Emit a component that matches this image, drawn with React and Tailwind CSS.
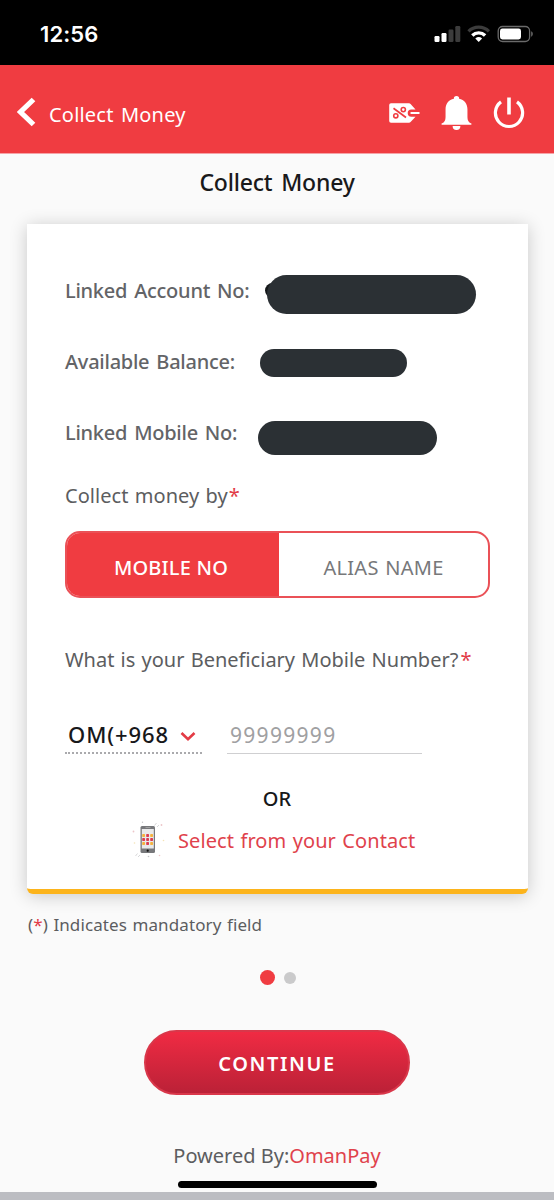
import React from 'react'

const accountRows = [
  { label: 'Linked Account No:', labelCls: 'w-[202px]', pill: 'w-[209px] h-[39px] mt-1.5', peek: true },
  { label: 'Available Balance:', labelCls: 'w-[195px]', pill: 'w-[147px] h-[28px]' },
  { label: 'Linked Mobile No:', labelCls: 'w-[193px]', pill: 'w-[179px] h-[34px] mt-[9px]' },
]

function StatusBar(){
  return (
    <div className="h-[65px] bg-black flex justify-between pl-[40px] pr-[20px] pt-[22px]">
      <span className="font-['Inter'] font-semibold text-[22px] leading-6 text-white tracking-[0.1px]">12:56</span>
      <svg className="mt-[3px]" width="100" height="18" viewBox="434 25 100 18" fill="none">
        <rect x="434.5" y="36" width="5" height="6" rx="1.2" fill="#fff"/>
        <rect x="441.5" y="33" width="5" height="9" rx="1.2" fill="#fff"/>
        <rect x="448.5" y="29.5" width="5" height="12.5" rx="1.2" fill="#3c3c3c"/>
        <rect x="455.3" y="26" width="5" height="16" rx="1.2" fill="#3c3c3c"/>
        <path d="M468.5 31.4a14.5 14.5 0 0 1 20.4 0" stroke="#3c3c3c" strokeWidth="3.2"/>
        <path d="M472.3 35.5a9.2 9.2 0 0 1 12.8 0" stroke="#fff" strokeWidth="3.4"/>
        <path d="M478.7 42l-3.4-3.6a5.2 5.2 0 0 1 6.8 0z" fill="#fff"/>
        <rect x="498.2" y="26.5" width="31.4" height="15" rx="4.4" stroke="#6a6a6a" strokeWidth="1.3"/>
        <rect x="500" y="28.5" width="21" height="11" rx="2.4" fill="#fff"/>
        <path d="M531.2 31.3c2.1.9 2.1 4.5 0 5.4z" fill="#6a6a6a"/>
      </svg>
    </div>
  )
}

function Header(){
  return (
    <div className="h-[89px] bg-[#f03c41] border-b border-[#f6a3a7] flex items-center pl-[17px] pr-[29px] text-white">
      <svg className="mt-[5px]" width="19" height="30" viewBox="0 0 19 30" fill="none"><path d="M16.5 2.5 3.5 15l13 12.5" stroke="#fff" strokeWidth="5.2"/></svg>
      <span className="ml-[13px] mt-[11px] text-[20px] tracking-[0.2px] [word-spacing:2px]">Collect Money</span>
      <div className="ml-auto mt-[6px] flex items-center">
        {/* offers tag */}
        <svg className="mt-[2px]" width="31" height="20" viewBox="0 0 31 20" fill="none">
          <path d="M2 .3h17.5c1 0 1.6.3 2.3 1l4.7 5.2h-4.2a3.6 3.6 0 0 0 0 7.2h4.2l-4.7 5c-.7.7-1.3 1-2.3 1H2a1.8 1.8 0 0 1-1.8-1.8V2.1A1.8 1.8 0 0 1 2 .3z" fill="#fff"/>
          <path d="M22.3 9.1h8.2v2h-8.2a1 1 0 0 1 0-2z" fill="#fff"/>
          <path d="M4.5 5.2l12.5 9.3" stroke="#f03c41" strokeWidth="1.7"/>
          <circle cx="14.3" cy="6.6" r="2.1" stroke="#f03c41" strokeWidth="1.6"/>
          <circle cx="6.8" cy="12.8" r="2.1" stroke="#f03c41" strokeWidth="1.6"/>
        </svg>
        <svg className="ml-[21px] mt-[2px]" width="31" height="36" viewBox="0 0 32 36" fill="#fff">
          <path d="M16 .5a2.7 2.7 0 0 1 2.7 2.9C24 4.5 27.3 8.7 27.3 14v8c0 3.5 1 5.3 3.9 6.8.7.4.5 1.2-.4 1.2H1.2c-.9 0-1.1-.8-.4-1.2C3.7 27.3 4.7 25.5 4.7 22v-8c0-5.3 3.3-9.5 8.6-10.6A2.7 2.7 0 0 1 16 .5z"/>
          <path d="M12 31.5h8a4 4 0 0 1-8 0z"/>
        </svg>
        <svg className="ml-[21px] mt-[2px]" width="32" height="32" viewBox="0 0 32 32" fill="none" stroke="#fff" strokeWidth="3.2">
          <path d="M8 4.9a13.6 13.6 0 1 0 16 0"/><path d="M16 .5v17" strokeWidth="3.6"/>
        </svg>
      </div>
    </div>
  )
}

function PhoneIcon(){
  const cols = [11.5, 15.5, 19.5]
  return (
    <svg className="relative left-px" width="34" height="38" viewBox="0 0 34 38">
      <rect x="8.5" y="5" width="14.5" height="27" rx="1.5" fill="#77787b"/>
      <rect x="9.8" y="8" width="12" height="19.5" fill="#e9e9ea"/>
      <rect x="13.5" y="6.2" width="5" height=".8" fill="#aaa"/>
      {cols.map((x,i)=>[14.5,18.5,22.5].map((y,j)=>(
        <rect key={x+'-'+y} x={x-1.3} y={y-1.4} width="2.8" height="2.8" rx=".6" fill={i===1||j===1 ? '#dc3a50' : '#f6b23c'}/>
      )))}
      <circle cx="15.7" cy="29.7" r="1.1" fill="#111"/>
      <g stroke="#c5c5c8" strokeWidth=".7">
        <path d="M22.5 4.5l2-2.5M25 6l2-2M5.5 32.5l-2 2.5M8 34l-2 2"/>
      </g>
      <g fill="#edc6c9">
        <circle cx="29.5" cy="4" r=".9"/><circle cx="1.5" cy="10.5" r=".9"/><circle cx="27.5" cy="34.5" r=".8"/>
      </g>
      <g fill="#c5c5c8"><circle cx="10.5" cy="1.3" r=".7"/><circle cx="16.5" cy="35.5" r=".8"/></g>
      <g fill="#f5e3b5"><circle cx="31.5" cy="19.5" r=".8"/><circle cx="2.5" cy="22" r=".8"/></g>
    </svg>
  )
}

const Star = ({className=''}) => <span className={'text-[#e23c47] '+className}>*</span>

export default function App(){
  return (
    <div className="w-[554px] h-[1200px] overflow-hidden bg-[#fafafa] flex flex-col font-['Noto_Sans',sans-serif] text-[#5c5d60] whitespace-nowrap">
      <StatusBar/>
      <Header/>
      <h1 className="h-[70px] pt-[12px] text-center text-[23px] leading-8 text-[#19191b] font-medium"><span className="[word-spacing:3px] tracking-[-0.2px]">Collect Money</span></h1>

      <div className="ml-[27px] mr-[26px] h-[670px] bg-white rounded-b-md border-b-[5px] border-[#fcb41c] shadow-[0_2px_18px_rgba(0,0,0,0.2)] pt-[32px] pl-[38px]">
        {accountRows.map(r=>(
          <div key={r.label} className="h-[71px] flex items-center">
            <span className={'relative bottom-px text-[20px] font-medium tracking-[-0.25px] [word-spacing:2px] text-[#636467] '+r.labelCls}>{r.label}</span>
            <div className={'relative '+r.pill}>
              {r.peek && <span className="absolute left-[-2px] top-[8px] w-4 h-[15px] rounded-full bg-[#15181a]"/>}
              <div className="relative size-full rounded-full bg-[#2b3034]"/>
            </div>
          </div>
        ))}
        <div className="h-[54px] flex items-center text-[20px]"><span className="tracking-[0.05px] [word-spacing:1px]">Collect money by</span><Star className="ml-px"/></div>

        <div className="mt-[8px] w-[425px] h-[67px] rounded-[15px] border-2 border-[#ea5157] bg-white overflow-hidden flex text-[20px]">
          <button className="w-[212px] bg-[#f03c41] text-white font-medium pt-1.5 pr-1"><span className="tracking-[0.2px]">MOBILE NO</span></button>
          <button className="flex-1 text-[#77787a] pt-1.5"><span className="tracking-[0.3px] [word-spacing:1px]">ALIAS NAME</span></button>
        </div>

        <div className="mt-[33px] h-[58px] flex items-center text-[20px]"><span className="[word-spacing:1px]">What is your Beneficiary Mobile Number?</span><Star className="ml-0.5"/></div>

        <div className="mt-[20px] h-[45px] flex items-end">
          <div className="w-[137px] h-[45px] flex items-center pl-[3px] pt-[7px] border-b-2 border-dotted border-[#aaaaad] text-[#17181a]">
            <span className="text-[22px] font-medium tracking-[0.9px]">OM(+968</span>
            <svg className="ml-[11px] mt-1" width="16" height="11" viewBox="0 0 16 11" fill="none"><path d="M1.5 2 8 8.3 14.5 2" stroke="#e33b45" strokeWidth="2.6"/></svg>
          </div>
          <div className="ml-[25px] w-[195px] h-[45px] flex items-center pl-[3px] pt-[10px] border-b border-[#cfcfd1] text-[21px] text-[#a0a0a2]"><span className="tracking-[1.3px]">99999999</span></div>
        </div>

        <div className="mt-[29px] h-[32px] w-[424px] text-center text-[20px] leading-8 font-medium text-[#17181a]">OR</div>
        <div className="h-[50px] pl-[66px] flex items-center text-[20px] text-[#e0424c]">
          <PhoneIcon/>
          <span className="ml-[13px] mt-[2px] tracking-[0.1px] [word-spacing:1px]">Select from your Contact</span>
        </div>
      </div>

      <div className="h-[62px] pl-[28px] leading-[62px] text-[17px]"><span className="tracking-[0.1px] [word-spacing:1px]">(<Star/>) Indicates mandatory field</span></div>

      <div className="h-[44px] flex items-center justify-center gap-[9px] mt-[-1px] pl-px">
        <span className="size-[15px] rounded-full bg-[#f03c41]"/>
        <span className="size-[12px] rounded-full bg-[#cacacb] mt-[2px]"/>
      </div>

      <button className="mt-[31px] ml-[144px] w-[266px] h-[65px] shrink-0 rounded-full border-2 border-[#d9374a] bg-linear-to-b from-[#f02b43] to-[#bb2137] text-white text-[20px] font-semibold tracking-[1.6px] pt-[3px]"><span>CONTINUE</span></button>

      <div className="mt-[45px] text-center text-[20px] leading-8"><span>Powered By:<span className="text-[#e0424c]">OmanPay</span></span></div>
      <div className="mt-[9px] ml-[178px] w-[199px] h-[7px] shrink-0 rounded-full bg-black"/>
      <div className="mt-auto h-[8px] shrink-0 bg-[#bcbdc2]"/>
    </div>
  )
}
